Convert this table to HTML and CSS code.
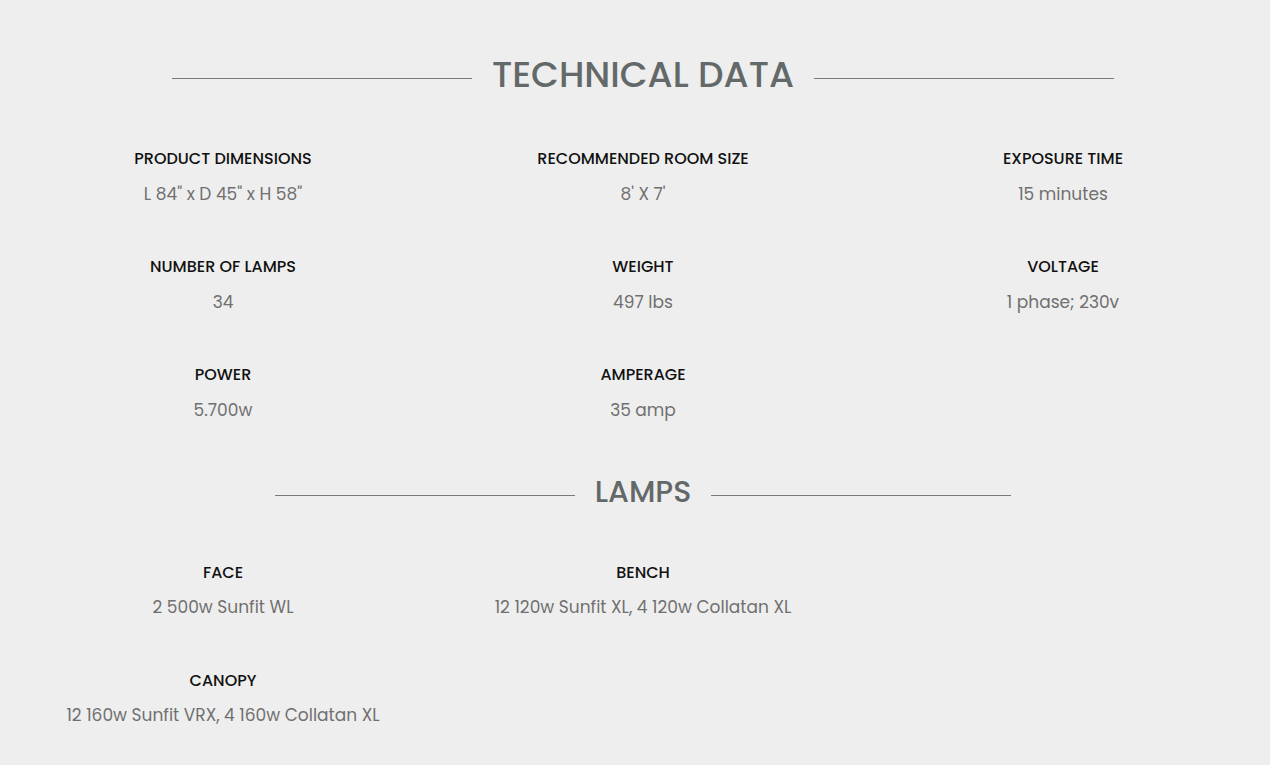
FILE: index.html
```html
<!DOCTYPE html>
<html lang="en">
<head>
<meta charset="utf-8">
<title>Technical Data</title>
<link rel="stylesheet" href="styles.css">
</head>
<body>
<main class="page">
  <section class="section">
    <div class="heading heading-tech">
      <span class="rule"></span>
      <h2 class="title">TECHNICAL DATA</h2>
      <span class="rule"></span>
    </div>
    <div class="grid">
      <div class="item"><h3 class="label">PRODUCT DIMENSIONS</h3><p class="value">L 84" x D 45" x H 58"</p></div>
      <div class="item"><h3 class="label">RECOMMENDED ROOM SIZE</h3><p class="value">8' X 7'</p></div>
      <div class="item"><h3 class="label">EXPOSURE TIME</h3><p class="value">15 minutes</p></div>
      <div class="item"><h3 class="label">NUMBER OF LAMPS</h3><p class="value">34</p></div>
      <div class="item"><h3 class="label">WEIGHT</h3><p class="value">497 lbs</p></div>
      <div class="item"><h3 class="label">VOLTAGE</h3><p class="value">1 phase; 230v</p></div>
      <div class="item"><h3 class="label">POWER</h3><p class="value">5.700w</p></div>
      <div class="item"><h3 class="label">AMPERAGE</h3><p class="value">35 amp</p></div>
    </div>
  </section>
  <section class="section">
    <div class="heading heading-lamps">
      <span class="rule"></span>
      <h2 class="title title-small">LAMPS</h2>
      <span class="rule"></span>
    </div>
    <div class="grid grid-lamps">
      <div class="item"><h3 class="label">FACE</h3><p class="value">2 500w Sunfit WL</p></div>
      <div class="item"><h3 class="label">BENCH</h3><p class="value">12 120w Sunfit XL, 4 120w Collatan XL</p></div>
      <div class="item empty"></div>
      <div class="item"><h3 class="label">CANOPY</h3><p class="value">12 160w Sunfit VRX, 4 160w Collatan XL</p></div>
    </div>
  </section>
</main>
</body>
</html>
```
FILE: styles.css
```css
html, body {
  margin: 0;
  padding: 0;
  background: #eeeeee;
  overflow: hidden;
}
body {
  font-family: "Poppins", "Open Sans", "Liberation Sans", sans-serif;
  width: 1270px;
  height: 765px;
}
.page {
  padding: 52px 0 0 13px;
  width: 1260px;
}
.heading {
  display: flex;
  align-items: center;
  justify-content: center;
  gap: 20px;
  height: 46px;
}
.rule {
  display: block;
  width: 300px;
  height: 1px;
  background: #777b7b;
  margin-top: 7px;
}
.title {
  margin: 0;
  font-size: 36px;
  font-weight: 500;
  color: #636868;
  line-height: 46px;
}
.title-small {
  font-size: 30px;
}
.grid {
  display: grid;
  grid-template-columns: repeat(3, 420px);
  margin-top: 51px;
}
.grid-lamps {
  margin-top: 48px;
}
.item {
  text-align: center;
  height: 108px;
}
.label {
  margin: 0;
  font-size: 16px;
  font-weight: 500;
  color: #111111;
  line-height: 20px;
}
.value {
  margin: 14px 0 0;
  font-size: 17px;
  font-weight: 400;
  color: #707070;
  line-height: 22px;
}
.grid-lamps .value {
  margin-top: 13px;
}
.heading-lamps {
  margin-top: -4px;
}
.heading-lamps .rule {
  margin-top: 6px;
}
```
